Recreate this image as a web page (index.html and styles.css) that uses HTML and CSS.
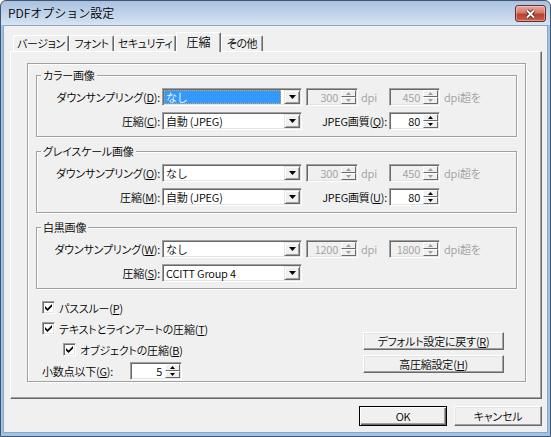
FILE: index.html
```html
<!DOCTYPE html>
<html lang="ja">
<head>
<meta charset="utf-8">
<title>PDFオプション設定</title>
<link rel="stylesheet" href="styles.css">
</head>
<body>
<div class="window">
  <div class="titlebar">
    <span class="title">PDFオプション設定</span>
    <div class="close">
      <svg width="13" height="10" viewBox="0 0 13 10"><path class="xo" d="M3 1.5 L10 8.5 M10 1.5 L3 8.5"/><path class="xi" d="M3 1.5 L10 8.5 M10 1.5 L3 8.5"/></svg>
    </div>
  </div>
  <div class="client">
    <div class="tabs">
      <div class="tab t1">バージョン</div>
      <div class="tab t2">フォント</div>
      <div class="tab t3">セキュリティ</div>
      <div class="tab t4 active">圧縮</div>
      <div class="tab t5">その他</div>
    </div>
    <div class="panel">
      <div class="frame">
        <fieldset class="group">
          <legend>カラー画像</legend>
          <div class="rows">
            <span class="lbl">ダウンサンプリング(<u>D</u>):</span>
            <div class="combo"><span class="val sel">なし</span><span class="drop"><svg width="7" height="4" viewBox="0 0 7 4"><path d="M0 0H7L3.5 4Z"/></svg></span></div>
            <div class="spin dis"><span class="num">300</span><span class="ud"><span class="ub"><svg width="5" height="3" viewBox="0 0 5 3"><path d="M2.5 0L5 3H0Z"/></svg></span><span class="ub"><svg width="5" height="3" viewBox="0 0 5 3"><path d="M0 0H5L2.5 3Z"/></svg></span></span></div>
            <span class="unit gray">dpi</span>
            <div class="spin narrow dis"><span class="num">450</span><span class="ud"><span class="ub"><svg width="5" height="3" viewBox="0 0 5 3"><path d="M2.5 0L5 3H0Z"/></svg></span><span class="ub"><svg width="5" height="3" viewBox="0 0 5 3"><path d="M0 0H5L2.5 3Z"/></svg></span></span></div>
            <span class="unit2 gray">dpi超を</span>
            <span class="lbl">圧縮(<u>C</u>):</span>
            <div class="combo"><span class="val">自動 (JPEG)</span><span class="drop"><svg width="7" height="4" viewBox="0 0 7 4"><path d="M0 0H7L3.5 4Z"/></svg></span></div>
            <span class="qlbl">JPEG画質(<u>Q</u>):</span>
            <div class="spin narrow"><span class="num">80</span><span class="ud"><span class="ub"><svg width="5" height="3" viewBox="0 0 5 3"><path d="M2.5 0L5 3H0Z"/></svg></span><span class="ub"><svg width="5" height="3" viewBox="0 0 5 3"><path d="M0 0H5L2.5 3Z"/></svg></span></span></div>
          </div>
        </fieldset>
        <fieldset class="group">
          <legend>グレイスケール画像</legend>
          <div class="rows">
            <span class="lbl">ダウンサンプリング(<u>O</u>):</span>
            <div class="combo"><span class="val">なし</span><span class="drop"><svg width="7" height="4" viewBox="0 0 7 4"><path d="M0 0H7L3.5 4Z"/></svg></span></div>
            <div class="spin dis"><span class="num">300</span><span class="ud"><span class="ub"><svg width="5" height="3" viewBox="0 0 5 3"><path d="M2.5 0L5 3H0Z"/></svg></span><span class="ub"><svg width="5" height="3" viewBox="0 0 5 3"><path d="M0 0H5L2.5 3Z"/></svg></span></span></div>
            <span class="unit gray">dpi</span>
            <div class="spin narrow dis"><span class="num">450</span><span class="ud"><span class="ub"><svg width="5" height="3" viewBox="0 0 5 3"><path d="M2.5 0L5 3H0Z"/></svg></span><span class="ub"><svg width="5" height="3" viewBox="0 0 5 3"><path d="M0 0H5L2.5 3Z"/></svg></span></span></div>
            <span class="unit2 gray">dpi超を</span>
            <span class="lbl">圧縮(<u>M</u>):</span>
            <div class="combo"><span class="val">自動 (JPEG)</span><span class="drop"><svg width="7" height="4" viewBox="0 0 7 4"><path d="M0 0H7L3.5 4Z"/></svg></span></div>
            <span class="qlbl">JPEG画質(<u>U</u>):</span>
            <div class="spin narrow"><span class="num">80</span><span class="ud"><span class="ub"><svg width="5" height="3" viewBox="0 0 5 3"><path d="M2.5 0L5 3H0Z"/></svg></span><span class="ub"><svg width="5" height="3" viewBox="0 0 5 3"><path d="M0 0H5L2.5 3Z"/></svg></span></span></div>
          </div>
        </fieldset>
        <fieldset class="group">
          <legend>白黒画像</legend>
          <div class="rows">
            <span class="lbl">ダウンサンプリング(<u>W</u>):</span>
            <div class="combo"><span class="val">なし</span><span class="drop"><svg width="7" height="4" viewBox="0 0 7 4"><path d="M0 0H7L3.5 4Z"/></svg></span></div>
            <div class="spin dis"><span class="num">1200</span><span class="ud"><span class="ub"><svg width="5" height="3" viewBox="0 0 5 3"><path d="M2.5 0L5 3H0Z"/></svg></span><span class="ub"><svg width="5" height="3" viewBox="0 0 5 3"><path d="M0 0H5L2.5 3Z"/></svg></span></span></div>
            <span class="unit gray">dpi</span>
            <div class="spin narrow dis"><span class="num">1800</span><span class="ud"><span class="ub"><svg width="5" height="3" viewBox="0 0 5 3"><path d="M2.5 0L5 3H0Z"/></svg></span><span class="ub"><svg width="5" height="3" viewBox="0 0 5 3"><path d="M0 0H5L2.5 3Z"/></svg></span></span></div>
            <span class="unit2 gray">dpi超を</span>
            <span class="lbl">圧縮(<u>S</u>):</span>
            <div class="combo"><span class="val">CCITT Group 4</span><span class="drop"><svg width="7" height="4" viewBox="0 0 7 4"><path d="M0 0H7L3.5 4Z"/></svg></span></div>
          </div>
        </fieldset>
        <div class="bottom">
          <div class="checks">
            <div class="chk"><span class="cb"><svg width="7" height="7" viewBox="0 0 7 7"><path d="M0 2L2.5 4.5L7 0V2.6L2.5 7L0 4.6Z"/></svg></span><span>パススルー(<u>P</u>)</span></div>
            <div class="chk"><span class="cb"><svg width="7" height="7" viewBox="0 0 7 7"><path d="M0 2L2.5 4.5L7 0V2.6L2.5 7L0 4.6Z"/></svg></span><span>テキストとラインアートの圧縮(<u>T</u>)</span></div>
            <div class="chk indent"><span class="cb"><svg width="7" height="7" viewBox="0 0 7 7"><path d="M0 2L2.5 4.5L7 0V2.6L2.5 7L0 4.6Z"/></svg></span><span>オブジェクトの圧縮(<u>B</u>)</span></div>
            <div class="dec">
              <span class="declbl">小数点以下(<u>G</u>):</span>
              <div class="spin"><span class="num">5</span><span class="ud"><span class="ub"><svg width="5" height="3" viewBox="0 0 5 3"><path d="M2.5 0L5 3H0Z"/></svg></span><span class="ub"><svg width="5" height="3" viewBox="0 0 5 3"><path d="M0 0H5L2.5 3Z"/></svg></span></span></div>
            </div>
          </div>
          <div class="btncol">
            <div class="btn wide">デフォルト設定に戻す(<u>R</u>)</div>
            <div class="btn wide">高圧縮設定(<u>H</u>)</div>
          </div>
        </div>
      </div>
    </div>
    <div class="dlgbtns">
      <div class="btn dlg default">OK</div>
      <div class="btn dlg">キャンセル</div>
    </div>
  </div>
</div>
</body>
</html>
```

FILE: styles.css
```css
* { box-sizing: border-box; }
html, body { margin: 0; padding: 0; }
body {
  width: 551px;
  height: 437px;
  overflow: hidden;
  background: #ffffff;
  font-family: "Noto Sans CJK JP", "Noto Sans", sans-serif;
  font-size: 11px;
  font-weight: 350;
  letter-spacing: -0.2px;
  color: #000;
  font-feature-settings: "palt";
}
u { text-decoration: underline; text-underline-offset: 1px; }

.window {
  width: 551px;
  height: 437px;
  border: 1px solid #44556b;
  border-radius: 6px 6px 0 0;
  background: linear-gradient(#a9c2e1 0, #d6e3f2 24px, #9cc4ea 24px);
  padding: 0 2px 3px;
  display: flex;
  flex-direction: column;
}

.titlebar {
  height: 24px;
  display: flex;
  justify-content: space-between;
  align-items: flex-start;
  padding-left: 5px;
}
.title {
  line-height: 24px;
  font-size: 12px;
  letter-spacing: 0;
  font-feature-settings: normal;
  color: #000;
}
.close {
  width: 31px;
  height: 17px;
  margin-top: 4px;
  margin-right: 2px;
  border: 1px solid #6a2b24;
  border-radius: 3px;
  background: linear-gradient(#e8a99d 0, #d2786a 45%, #b8402f 55%, #c8624f 100%);
  box-shadow: inset 0 0 0 1px rgba(255,255,255,0.35);
  display: flex;
  align-items: center;
  justify-content: center;
}
.close .xo { stroke: #4a2420; stroke-width: 3.6; fill: none; }
.close .xi { stroke: #ffffff; stroke-width: 1.8; fill: none; }

.client {
  flex: 1;
  background: #f0f0f0;
  border: 1px solid #8ea5c0;
  padding: 6px 5px 0 6px;
  display: flex;
  flex-direction: column;
}

.tabs {
  height: 19px;
  display: flex;
  align-items: flex-end;
  padding-left: 3px;
  position: relative;
  z-index: 1;
}
.tab {
  height: 16px;
  line-height: 15px;
  text-align: center;
  background: #f0f0f0;
  border-top: 1px solid #ffffff;
  border-left: 1px solid #ffffff;
  border-right: 1px solid #696969;
  box-shadow: inset -1px 0 #a0a0a0;
  border-radius: 2px 2px 0 0;
  white-space: nowrap;
  letter-spacing: -0.4px;
}
.t1 { width: 56px; }
.t2 { width: 45px; }
.t3 { width: 62px; }
.t4 { width: 45px; }
.t5 { width: 42px; }
.tab.active {
  height: 20px;
  margin-bottom: -1px;
  line-height: 17px;
  font-size: 12px;
  letter-spacing: 0;
}

.panel {
  height: 348px;
  background: #f0f0f0;
  border-top: 1px solid #ffffff;
  border-left: 1px solid #ffffff;
  border-right: 1px solid #696969;
  border-bottom: 1px solid #696969;
  box-shadow: inset -1px -1px #a0a0a0;
  padding: 11px 0 0 16px;
}

.frame {
  width: 499px;
  border: 1px solid #a0a0a0;
  box-shadow: 1px 1px 0 #ffffff, inset 1px 1px 0 #ffffff;
  padding: 4px 0 1px 8px;
}

.group {
  width: 481px;
  margin: 0;
  padding: 6px 0 6px 0;
  border: 1px solid #a0a0a0;
  box-shadow: 1px 1px 0 #ffffff, inset 1px 1px 0 #ffffff;
  min-inline-size: auto;
}
.group + .group { margin-top: 7px; }
.group legend {
  padding: 0 2px;
  margin-left: 4px;
  height: 14px;
  line-height: 14px;
  background: #f0f0f0;
}

.rows {
  display: grid;
  grid-template-columns: 125px 144px 52px 31px 51px 1fr;
  grid-auto-rows: 18px;
  row-gap: 6px;
  align-items: center;
}
.lbl {
  text-align: right;
  padding-right: 2px;
  white-space: nowrap;
  line-height: 14px;
}
.qlbl {
  grid-column: 3 / 5;
  text-align: right;
  padding-right: 2px;
  white-space: nowrap;
  line-height: 14px;
}
.unit { padding-left: 3px; line-height: 14px; }
.unit2 { padding-left: 4px; line-height: 14px; white-space: nowrap; }
.gray { color: #a0a0a0; }

.combo {
  width: 140px;
  height: 18px;
  display: flex;
  background: #ffffff;
  border: 1px solid;
  border-color: #a0a0a0 #ffffff #ffffff #a0a0a0;
  box-shadow: inset 1px 1px #696969, inset -1px -1px #e3e3e3;
  padding: 1px;
}
.val {
  flex: 1;
  margin: 0 3px 0 0;
  padding-left: 2px;
  line-height: 14px;
  white-space: nowrap;
  font-feature-settings: normal;
}
.val.sel {
  background: #3399ff;
  color: #ffffff;
  outline: 1px dotted #e9a640;
  outline-offset: -1px;
}
.drop {
  width: 16px;
  height: 14px;
  background: #f0f0f0;
  border: 1px solid;
  border-color: #e3e3e3 #696969 #696969 #e3e3e3;
  box-shadow: inset 1px 1px #ffffff, inset -1px -1px #a0a0a0;
  display: flex;
  align-items: center;
  justify-content: center;
}
.drop svg { fill: #000; }

.spin {
  width: 52px;
  height: 18px;
  display: flex;
  background: #ffffff;
  border: 1px solid;
  border-color: #a0a0a0 #ffffff #ffffff #a0a0a0;
  box-shadow: inset 1px 1px #696969, inset -1px -1px #e3e3e3;
  padding: 1px;
}
.spin.narrow { width: 51px; }
.spin.dis { background: #f0f0f0; color: #a0a0a0; }
.num {
  flex: 1;
  text-align: right;
  padding-right: 3px;
  line-height: 14px;
}
.ud {
  width: 15px;
  display: flex;
  flex-direction: column;
}
.ub {
  flex: 1;
  background: #f0f0f0;
  border: 1px solid;
  border-color: #ffffff #696969 #696969 #ffffff;
  display: flex;
  align-items: center;
  justify-content: center;
}
.ub svg { fill: #000; }
.spin.dis .ub svg { fill: #a0a0a0; }

.bottom {
  display: flex;
  justify-content: space-between;
  margin-top: 8px;
  padding: 0 21px 0 6px;
}
.checks { display: flex; flex-direction: column; }
.chk {
  height: 21px;
  display: flex;
  align-items: center;
  gap: 4px;
  line-height: 14px;
  white-space: nowrap;
}
.chk.indent { padding-left: 21px; }
.cb {
  width: 13px;
  height: 13px;
  background: #ffffff;
  border: 1px solid;
  border-color: #a0a0a0 #ffffff #ffffff #a0a0a0;
  box-shadow: inset 1px 1px #696969, inset -1px -1px #e3e3e3;
  display: flex;
  align-items: center;
  justify-content: center;
}
.cb svg { fill: #000; }
.dec {
  height: 18px;
  margin-top: 2px;
  display: flex;
  align-items: center;
}
.declbl { width: 88px; line-height: 14px; white-space: nowrap; }

.btncol {
  display: flex;
  flex-direction: column;
  gap: 5px;
  padding-top: 35px;
}
.btn {
  height: 18px;
  background: #f0f0f0;
  border: 1px solid;
  border-color: #ffffff #696969 #696969 #ffffff;
  box-shadow: inset -1px -1px #a0a0a0, inset 1px 1px #e3e3e3;
  display: flex;
  align-items: center;
  justify-content: center;
  line-height: 14px;
  white-space: nowrap;
}
.btn.wide { width: 141px; }

.dlgbtns {
  display: flex;
  justify-content: flex-end;
  gap: 7px;
  margin-top: 7px;
}
.btn.dlg { width: 88px; height: 20px; }
.btn.default {
  border: 1px solid #000000;
  box-shadow: inset 1px 1px #ffffff, inset -1px -1px #696969, inset -2px -2px #a0a0a0;
}
```
